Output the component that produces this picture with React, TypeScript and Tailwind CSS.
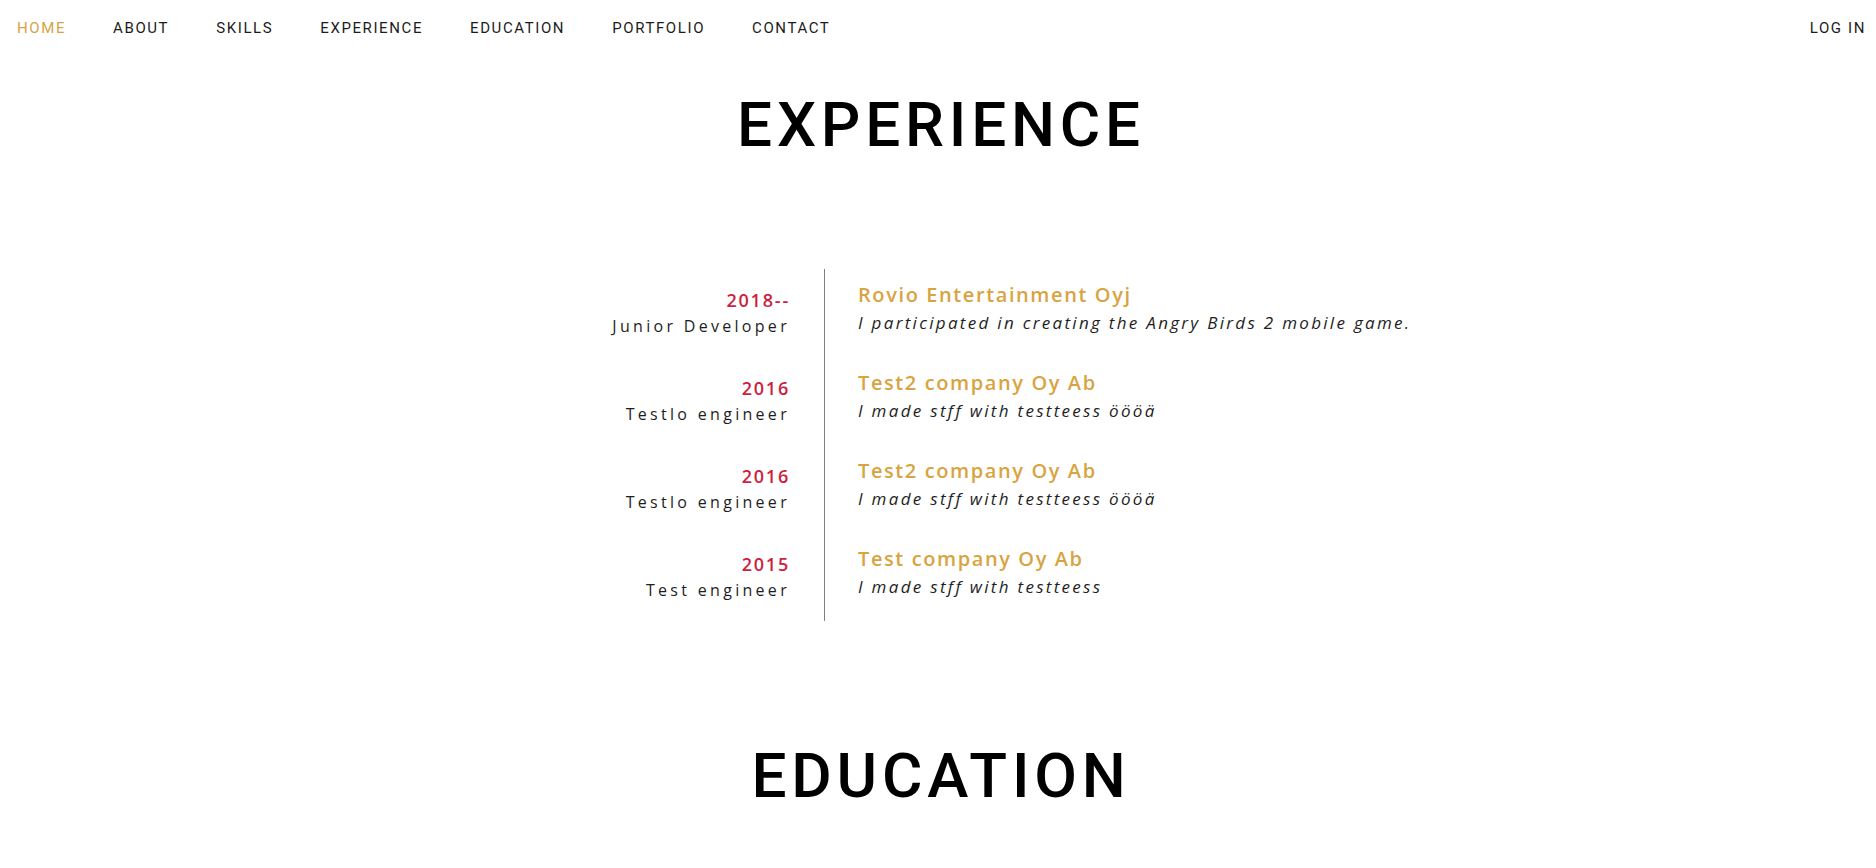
import React from "react";

const navItems = ["HOME", "ABOUT", "SKILLS", "EXPERIENCE", "EDUCATION", "PORTFOLIO", "CONTACT"];

const jobs = [
  { year: "2018--", role: "Junior Developer", company: "Rovio Entertainment Oyj", desc: "I participated in creating the Angry Birds 2 mobile game." },
  { year: "2016", role: "Testlo engineer", company: "Test2 company Oy Ab", desc: "I made stff with testteess öööä" },
  { year: "2016", role: "Testlo engineer", company: "Test2 company Oy Ab", desc: "I made stff with testteess öööä" },
  { year: "2015", role: "Test engineer", company: "Test company Oy Ab", desc: "I made stff with testteess" },
];

export default function App() {
  return (
    <div className="min-h-[868px] bg-white text-[#1a1a1a]">
      <nav className="flex h-[56px] items-center justify-between pl-[17px] pr-[10px] font-['Roboto',sans-serif] text-[15px] tracking-[1.6px]">
        <ul className="flex items-center gap-[47px]">
          {navItems.map((n, i) => (
            <li key={n} className={i === 0 ? "text-[#d6a445]" : "text-[#1c1c1c]"}>
              {n}
            </li>
          ))}
        </ul>
        <span className="text-[#1c1c1c]">LOG IN</span>
      </nav>

      <h2 className="mt-[32px] pl-[6px] text-center font-['Roboto',sans-serif] text-[62px] font-medium leading-[1.2] tracking-[4.8px] text-black">
        EXPERIENCE
      </h2>

      <section className="mx-auto mt-[107px] flex w-[796px] flex-col font-['Open_Sans',sans-serif]">
        {jobs.map((j, i) => (
          <div key={i} className="flex h-[88px]">
            <div className="w-[284px] shrink-0 pr-[34px] pt-[18px] text-right">
              <div className="text-[18px] font-semibold leading-[26px] tracking-[1.8px] text-[#cc1f41]">{j.year}</div>
              <div className="text-[16px] leading-[26px] tracking-[3.3px] text-[#1e1e1e]">{j.role}</div>
            </div>
            <div className="flex-1 whitespace-nowrap border-l border-[#808080] pl-[33px] pt-[12px]">
              <div className="text-[20px] font-semibold leading-[28px] tracking-[1.6px] text-[#d8a442]">{j.company}</div>
              <div className="text-[17px] italic leading-[28px] tracking-[2.3px] text-[#1e1e1e]">{j.desc}</div>
            </div>
          </div>
        ))}
      </section>

      <h2 className="mt-[118px] pl-[6px] text-center font-['Roboto',sans-serif] text-[62px] font-medium leading-[1.2] tracking-[4.8px] text-black">
        EDUCATION
      </h2>
    </div>
  );
}
